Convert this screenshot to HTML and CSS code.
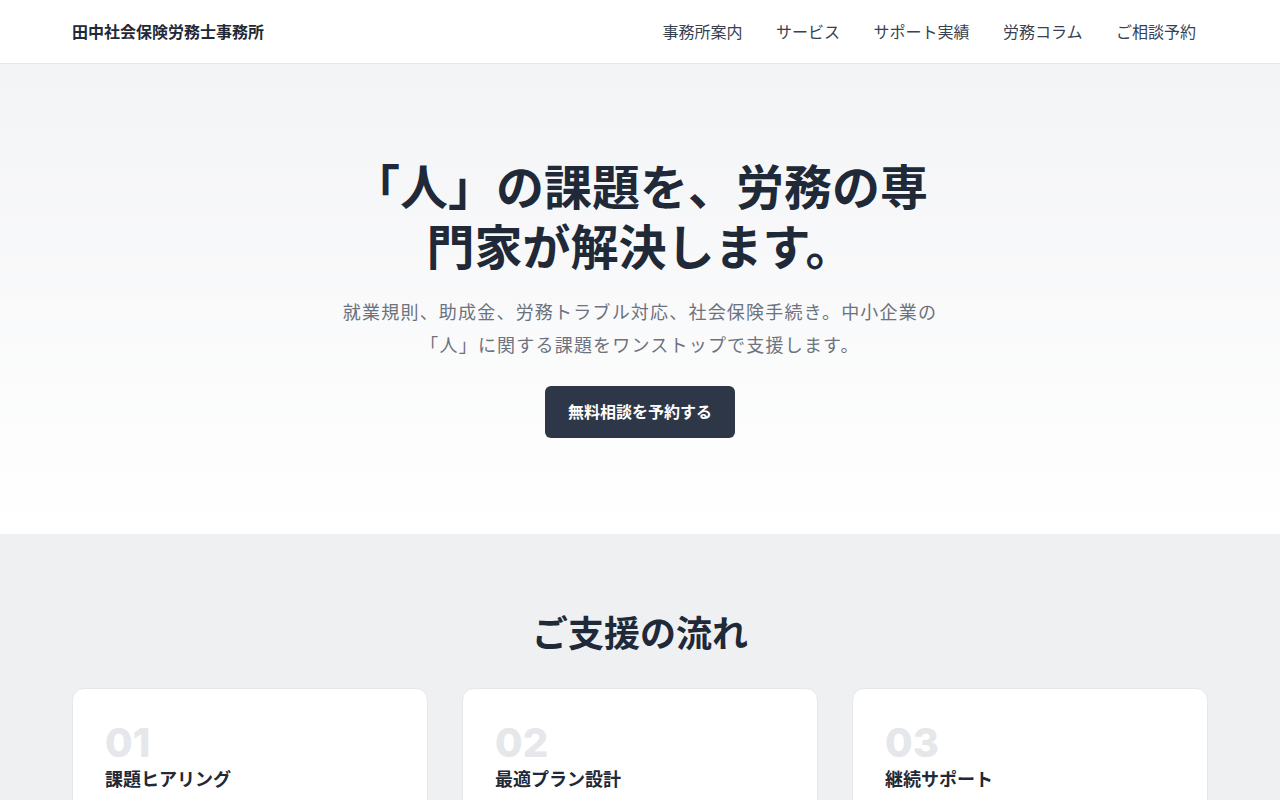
FILE: index.html
```html
<!DOCTYPE html>
<html lang="ja">
<head>
<meta charset="utf-8">
<title>田中社会保険労務士事務所</title>
<link rel="stylesheet" href="styles.css">
</head>
<body>
<header class="site-header">
  <div class="header-inner">
    <div class="logo">田中社会保険労務士事務所</div>
    <nav class="nav">
      <a href="#">事務所案内</a>
      <a href="#">サービス</a>
      <a href="#">サポート実績</a>
      <a href="#">労務コラム</a>
      <a href="#">ご相談予約</a>
    </nav>
  </div>
</header>
<section class="hero">
  <div class="hero-inner">
    <h1 class="hero-title">「人」の課題を、労務の専門家が解決します。</h1>
    <p class="hero-lead">就業規則、助成金、労務トラブル対応、社会保険手続き。中小企業の「人」に関する課題をワンストップで支援します。</p>
    <a class="btn" href="#">無料相談を予約する</a>
  </div>
</section>
<section class="flow">
  <h2 class="section-title">ご支援の流れ</h2>
  <div class="cards">
    <div class="card">
      <div class="card-num">01</div>
      <h3 class="card-title">課題ヒアリング</h3>
    </div>
    <div class="card">
      <div class="card-num">02</div>
      <h3 class="card-title">最適プラン設計</h3>
    </div>
    <div class="card">
      <div class="card-num">03</div>
      <h3 class="card-title">継続サポート</h3>
    </div>
  </div>
</section>
</body>
</html>
```
FILE: styles.css
```css
* { box-sizing: border-box; }
html, body { margin: 0; padding: 0; }
body {
  font-family: "Inter", "Noto Sans CJK JP", sans-serif;
  color: #1f2937;
  background: #fff;
}
a { text-decoration: none; color: inherit; }

.site-header {
  height: 64px;
  background: #fff;
  border-bottom: 1px solid #e5e7eb;
}
.header-inner {
  max-width: 1136px;
  margin: 0 auto;
  height: 63px;
  padding-bottom: 2px;
  display: flex;
  align-items: center;
  justify-content: space-between;
}
.logo {
  font-size: 16px;
  font-weight: 700;
  color: #1f2937;
}
.nav {
  display: flex;
  gap: 33.5px;
  margin-right: 12px;
}
.nav a {
  font-size: 16px;
  color: #374151;
}

.hero {
  background: linear-gradient(to bottom, #f3f4f6, #ffffff);
  padding: 94px 0 96px;
}
.hero-inner {
  max-width: 600px;
  margin: 0 auto;
  text-align: center;
  display: flex;
  flex-direction: column;
  align-items: center;
}
.hero-title {
  margin: 0;
  font-size: 48px;
  line-height: 60px;
  font-weight: 700;
  color: #1f2937;
}
.hero-lead {
  margin: 18px 0 0;
  font-size: 18px;
  letter-spacing: 1.2px;
  line-height: 33px;
  color: #6b7280;
}
.btn {
  margin-top: 24px;
  display: inline-block;
  background: #2d3748;
  color: #fff;
  font-size: 16px;
  font-weight: 700;
  line-height: 20px;
  padding: 16px 23px;
  border-radius: 6px;
}

.flow {
  background: #eef0f2;
  padding: 80px 0 80px;
}
.section-title {
  margin: 0 0 34px;
  text-align: center;
  font-size: 36px;
  line-height: 40px;
  font-weight: 700;
  color: #1f2937;
}
.cards {
  max-width: 1136px;
  margin: 0 auto;
  display: grid;
  grid-template-columns: repeat(3, 1fr);
  gap: 34px;
}
.card {
  background: #fff;
  border: 1px solid #e5e7eb;
  border-radius: 12px;
  padding: 34px 32px 40px;
  min-height: 200px;
}
.card-num {
  font-size: 40px;
  font-weight: 800;
  line-height: 40px;
  color: #e5e7eb;
}
.card-title {
  margin: 3px 0 0;
  font-size: 18px;
  font-weight: 700;
  line-height: 28px;
  color: #1f2937;
}
```
